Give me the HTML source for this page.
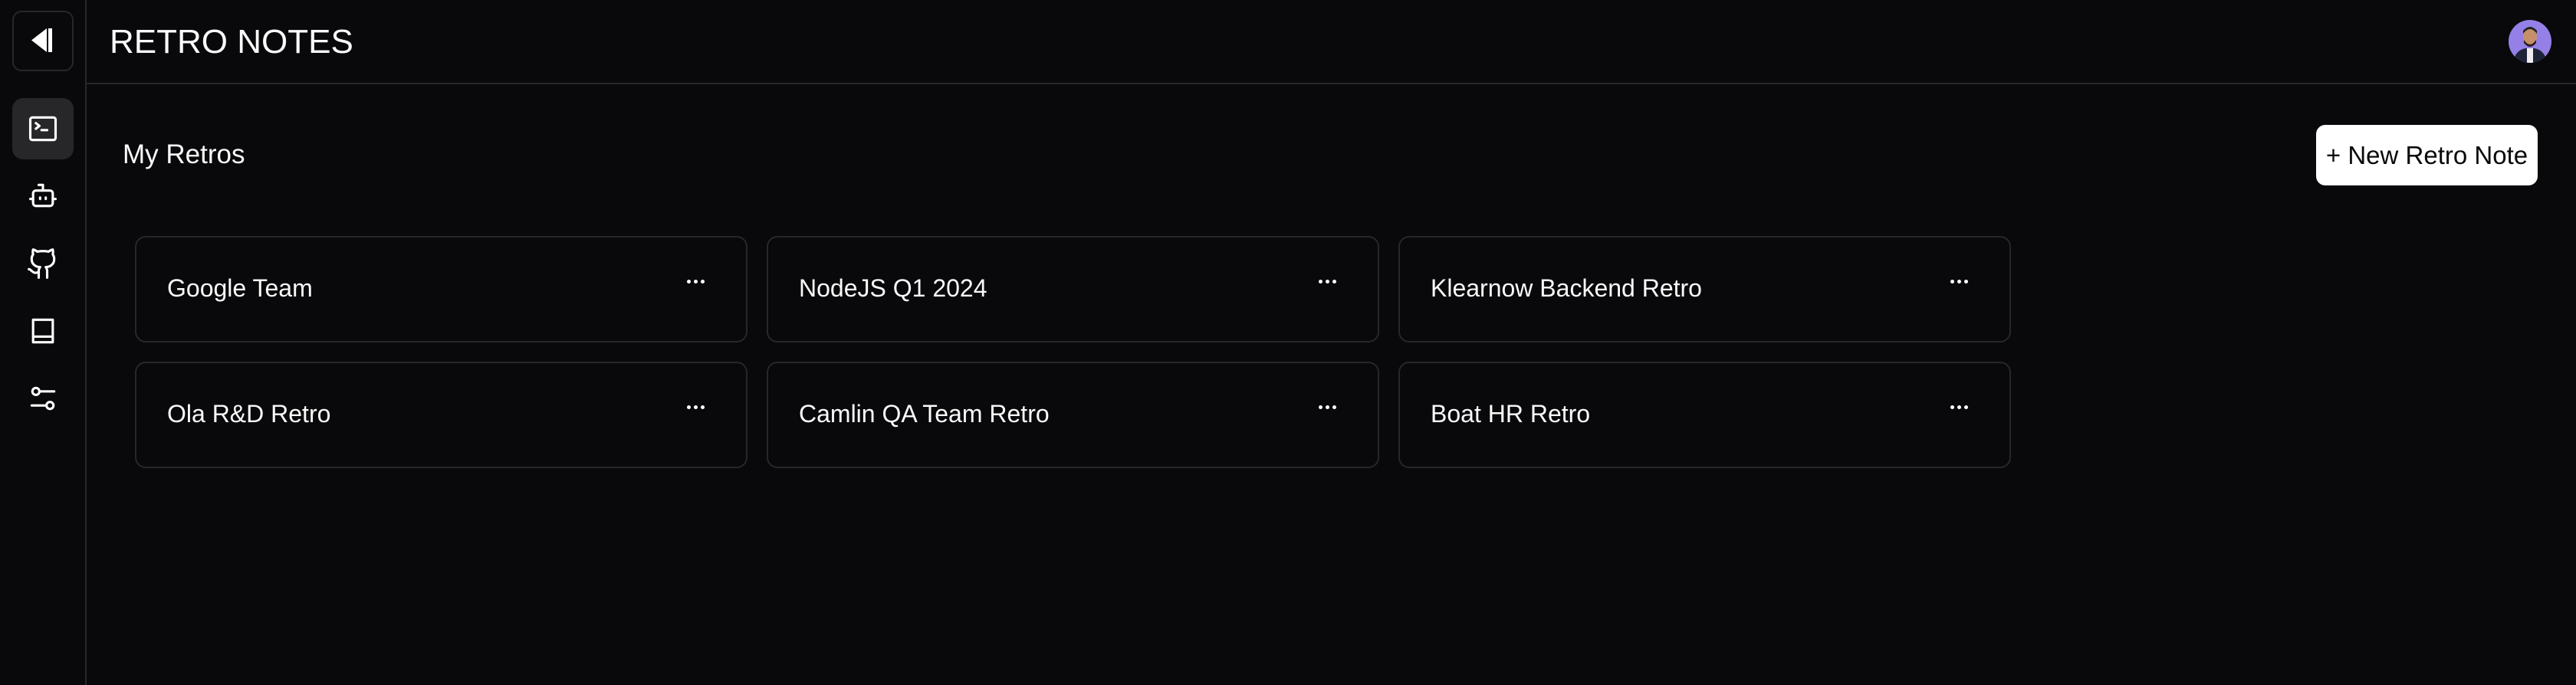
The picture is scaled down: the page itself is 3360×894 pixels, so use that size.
<!DOCTYPE html>
<html><head><meta charset="utf-8"><style>
*{box-sizing:border-box;margin:0;padding:0}
html,body{width:3360px;height:894px;background:#09090b;color:#fafafa;font-family:"Liberation Sans",sans-serif;overflow:hidden;position:relative}
.side{position:absolute;left:0;top:0;width:113px;height:894px;border-right:2px solid #27272a}
.hdr{position:absolute;left:113px;top:0;right:0;height:110px;border-bottom:2px solid #27272a}
.tog{position:absolute;left:16px;top:14px;width:80px;height:79px;border:2px solid #27272a;border-radius:12px}
.act{position:absolute;left:16px;top:128px;width:80px;height:80px;background:#27272a;border-radius:14px}
.ic{position:absolute;left:34px;width:44px;height:44px}
.title{position:absolute;left:143px;top:28px;font-size:44px;line-height:54px}
.avatar{position:absolute;left:3272px;top:26px;width:56px;height:56px;border-radius:50%;background:#9580e8;overflow:hidden}
.h2{position:absolute;left:160px;top:181px;font-size:35px;line-height:42px}
.btn{position:absolute;left:3021px;top:163px;width:289px;height:79px;background:#fff;color:#09090b;border-radius:12px;font-size:33px;line-height:79px;text-align:center}
.card{position:absolute;width:799px;height:139px;border:2px solid #27272a;border-radius:14px}
.card span{position:absolute;left:40px;top:46px;font-size:32px;line-height:40px}
.dots{position:absolute;left:718px;top:47px}
.dots i{display:inline-block;width:5px;height:5px;border-radius:50%;background:#fff;margin-right:4px}
</style></head><body>
<div class="side">
<div class="tog"><svg width="76" height="75" viewBox="0 0 76 75"><path d="M43 21 L23 36.5 L43 52 Z" fill="#fff"/><rect x="45" y="21" width="5" height="31" fill="#fff"/></svg></div>
<div class="act"></div>
<svg class="ic" style="top:146px" viewBox="0 0 24 24" fill="none" stroke="#fff" stroke-width="1.7" stroke-linecap="round" stroke-linejoin="round"><rect x="3" y="4" width="18" height="16" rx="1.5"/><path d="M7 8l2.5 2L7 12M11 13h4"/></svg>
<svg class="ic" style="top:234px" viewBox="0 0 24 24" fill="none" stroke="#fff" stroke-width="1.7" stroke-linecap="round" stroke-linejoin="round"><path d="M12 8V4H9"/><rect x="5" y="8" width="14" height="11" rx="2"/><path d="M3 14h2M19 14h2M10 13v1M14 13v1"/></svg>
<svg class="ic" style="top:322px" viewBox="0 0 24 24" fill="none" stroke="#fff" stroke-width="1.7" stroke-linecap="round" stroke-linejoin="round"><path d="M15 22v-4a4.8 4.8 0 0 0-1-3.5c3 0 6-2 6-5.5.08-1.250-.27-2.48-1-3.5.28-1.15.28-2.350 0-3.5 0 0-1 0-3 1.5-2.64-.5-5.36-.5-8 0C6 2 5 2 5 2c-.3 1.15-.3 2.35 0 3.5A5.4 5.4 0 0 0 4 9c0 3.5 3 5.5 6 5.5-.39.49-.68 1.05-.85 1.65-.17.6-.22 1.23-.15 1.85v4"/><path d="M9 18c-4.51 2-5-2-7-2"/></svg>
<svg class="ic" style="top:410px" viewBox="0 0 24 24" fill="none" stroke="#fff" stroke-width="1.7" stroke-linecap="round" stroke-linejoin="round"><path d="M5 4h14v16H5zM5 16h14"/></svg>
<svg class="ic" style="top:498px" viewBox="0 0 24 24" fill="none" stroke="#fff" stroke-width="1.7" stroke-linecap="round" stroke-linejoin="round"><circle cx="7" cy="7" r="2.5"/><path d="M9.5 7H20M4 17h10.5"/><circle cx="17" cy="17" r="2.5"/></svg>
</div>
<div class="hdr"></div>
<div class="title">RETRO NOTES</div>
<div class="avatar"><svg width="56" height="56" viewBox="0 0 56 56"><path d="M6 56 Q8 40 22 37 L34 37 Q48 40 50 56Z" fill="#1d2438"/><rect x="24" y="37" width="8" height="19" fill="#eee"/><ellipse cx="28" cy="22" rx="9" ry="11" fill="#c58f6a"/><path d="M19 18 Q28 6 37 18 L37 14 Q28 4 19 14Z" fill="#222"/><path d="M20 26 Q28 38 36 26 L36 30 Q28 40 20 30Z" fill="#2a1e18"/></svg></div>
<div class="h2">My Retros</div>
<div class="btn">+ New Retro Note</div>
<div class="card" style="left:176px;top:308px"><span>Google Team</span><div class="dots"><i></i><i></i><i></i></div></div>
<div class="card" style="left:1000px;top:308px"><span>NodeJS Q1 2024</span><div class="dots"><i></i><i></i><i></i></div></div>
<div class="card" style="left:1824px;top:308px"><span>Klearnow Backend Retro</span><div class="dots"><i></i><i></i><i></i></div></div>
<div class="card" style="left:176px;top:472px"><span>Ola R&amp;D Retro</span><div class="dots"><i></i><i></i><i></i></div></div>
<div class="card" style="left:1000px;top:472px"><span>Camlin QA Team Retro</span><div class="dots"><i></i><i></i><i></i></div></div>
<div class="card" style="left:1824px;top:472px"><span>Boat HR Retro</span><div class="dots"><i></i><i></i><i></i></div></div>
</body></html>
